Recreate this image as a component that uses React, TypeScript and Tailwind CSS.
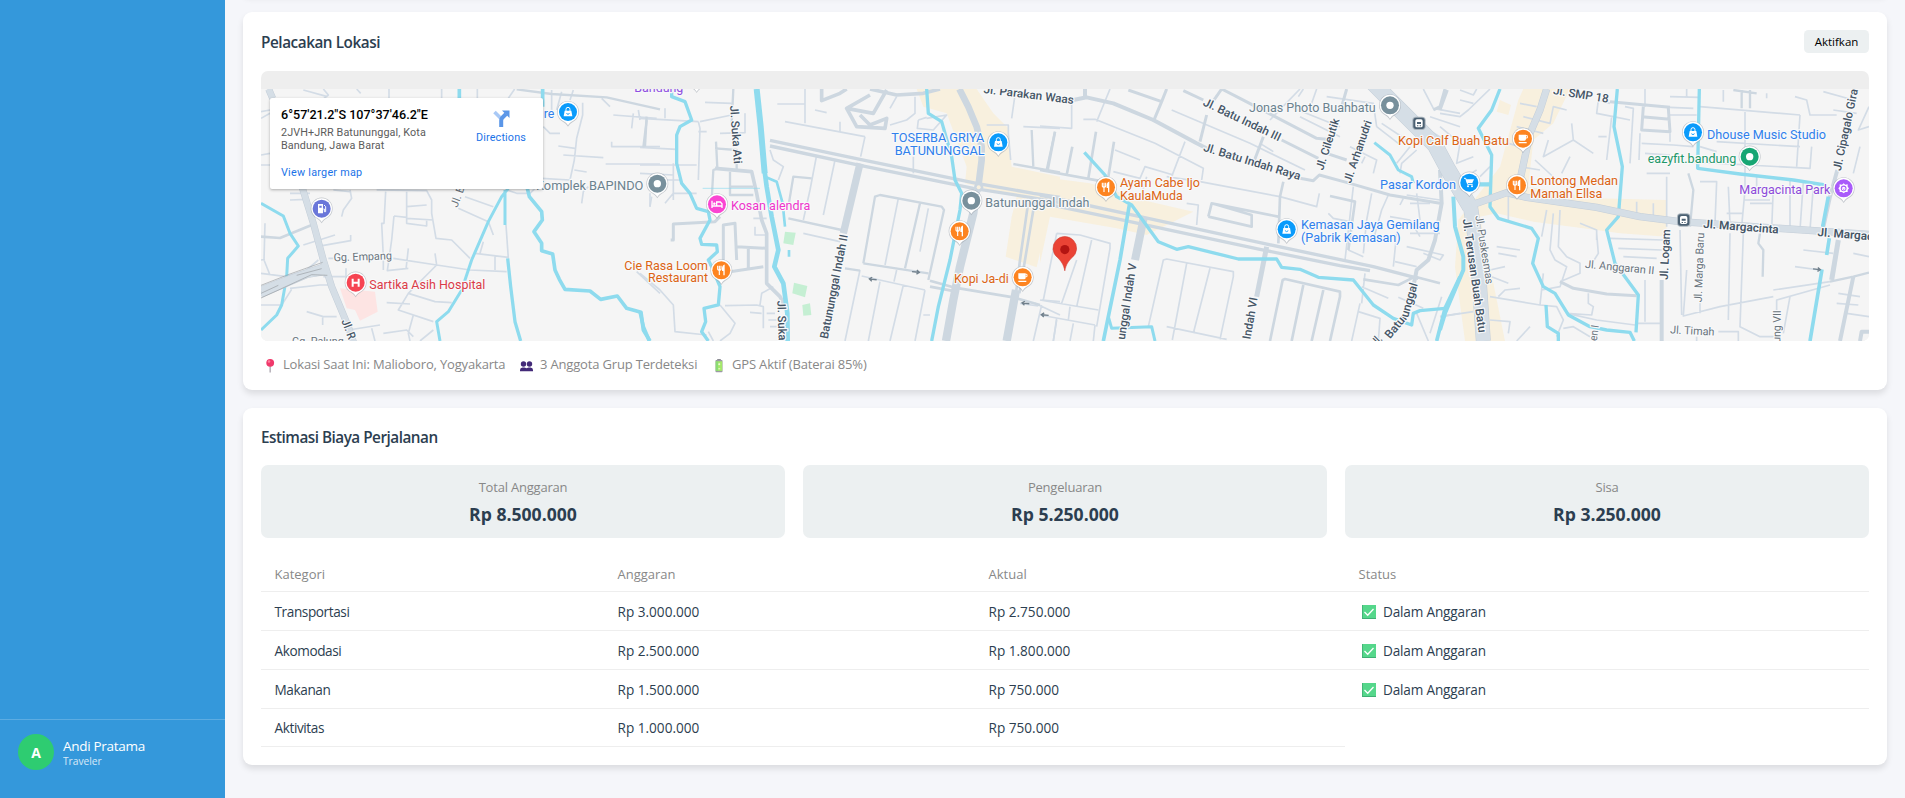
import React from "react";

type Stroke = { d: string; w: number };
type Label = { t: string; x: number; y: number; w: number; c?: string; r?: number; s?: number; b?: number };
type Pin = { x: number; y: number; kind: PinKind };
type PinKind = "bag" | "dot" | "bed" | "fork" | "cup" | "fuel" | "hospital" | "cart" | "green" | "park";
type Tile = {
  x: number;
  y: number;
  areas: { d: string; c: string }[];
  minor: string;
  roads: Stroke[];
  highways: Stroke[];
  water: Stroke[];
  labels: Label[];
  pins: Pin[];
  arrows?: [number, number, number][];
  transit?: [number, number][];
};

const BLUE = "#2f80ec";
const ORANGE = "#dc6414";
const SLATE = "#6b828e";
const ROAD = "#455566";
const LANE = "#68737c";
const SAND = "#f8f0de";

const tiles: Tile[] = [
  {
    x: 240,
    y: 0,
    areas: [{ d: "M300 865L405 875L413 935L360 962L345 930L320 925Z", c: "#fde4e3" }],
    minor:
      "M190 270L262 290M250 267L265 285L252 295M350 267L362 280M447 267V295M605 267V295M712 267V295M824 267L805 295M935 270V335M965 275L950 330M1000 270L990 300M1028 308V345L1010 415L1003 480L990 540L905 535M1085 295L1110 320M1120 345L1250 355M1175 385L1180 340M1195 330L1200 360M1115 425V440H1260M1097 492H1260M955 438L1005 445M970 465L1090 473M1003 510L1040 516M910 380L930 400H960M63 335L90 330M63 355L90 340M63 465L90 460M63 495H90M75 670L72 780L90 825M63 780L75 778M63 820L140 830M150 580H210M150 600L200 598M190 735L285 705M230 740L332 722V705M330 570L335 595L310 630L305 650M280 570L330 575M410 570L560 572L575 600L575 640L588 715L635 720L690 775M437 575L432 670H425L430 770V810M500 575V670L560 678V660M500 620L560 615M500 655L580 660M462 648L500 652M462 648L455 720L442 812L505 805M505 745L498 808M460 775L590 795L690 810L800 815M585 760L590 795L505 880L475 930L580 965M505 880L585 905L635 908M440 908L510 912M675 590L760 620M655 625L745 665L760 705M730 725L720 760M705 760L805 772M765 770V810M798 675L805 775M800 570L830 580L870 580L885 565M520 945L505 1000L510 1023M580 990L540 1023M430 1000L500 990L520 1010M200 935L250 950H290M248 950V975M325 990L420 975M395 985L405 1023M265 775H285M250 830H320M150 865L240 855H265M63 915L125 915L155 868M318 835V805M1025 610L1030 575L1045 560M1230 620L1235 590M1190 815L1260 880M140 830L200 810L235 780",
    roads: [
      { d: "M63 710L120 714L215 675", w: 8 },
      { d: "M830 268L935 282L1100 292L1260 328M1215 440L1220 350", w: 7 },
    ],
    highways: [
      { d: "M86 267L98 295M186 560L220 670L250 780L275 860L325 980L345 1040", w: 18 },
      { d: "M63 868L150 835L255 798M63 884L200 825L262 815", w: 16 },
    ],
    water: [
      { d: "M63 610L130 648L150 700L175 738L143 775L140 830L125 915L110 945L63 990", w: 9 },
      { d: "M658 267V295M908 267V320", w: 11 },
      { d: "M805 565L785 590L745 665L695 780L665 870L625 935L590 965L600 1023M795 570V675", w: 9 },
      { d: "M803 775L812 860L825 965L842 1023", w: 10 },
      { d: "M862 565L868 590L905 635L907 660L882 695L905 730V752L938 762L945 810L958 838L975 868L1050 873L1082 898L1132 888L1160 925L1203 937L1210 990L1230 1023", w: 11 },
    ],
    labels: [
      { t: "re", x: 911, y: 353, w: 32, c: BLUE },
      { t: "Komplek BAPINDO", x: 888, y: 569, w: 322, c: SLATE },
      { t: "Gg. Empang", x: 281, y: 784, w: 175, c: LANE, r: -2, s: 33 },
      { t: "Sartika Asih Hospital", x: 388, y: 866, w: 348, c: "#db3b48" },
      { t: "Gg. Palung", x: 156, y: 1034, w: 155, c: LANE, s: 33 },
      { t: "Jl. R", x: 304, y: 963, w: 62, r: 69, b: 500 },
      { t: "Jl. B", x: 652, y: 624, w: 66, c: LANE, r: -70, s: 33 },
    ],
    pins: [
      { x: 984, y: 336, kind: "bag" },
      { x: 245, y: 626, kind: "fuel" },
      { x: 347, y: 848, kind: "hospital" },
    ],
  },
  {
    x: 640,
    y: 60,
    areas: [
      { d: "M830 87H1010L1060 160L1105 205L1115 320L1260 350V450L1225 470L1190 622L1097 590L1115 470L1130 410L975 370L980 320L920 160L850 140Z", c: SAND },
      { d: "M435 515L467 518L460 555L430 550Z", c: "#c5efd3" },
      { d: "M462 668L502 678L495 712L457 700Z", c: "#c5efd3" },
      { d: "M487 735L510 730L514 765L490 767Z", c: "#c5efd3" },
    ],
    minor:
      "M412 132H495M495 87V190M435 185L675 230M675 230L662 290M600 185V215M750 145L770 110M525 150L560 158M0 315H170M0 262L110 268M75 175V145M0 175L175 185M175 185L180 205L175 360M175 215H200M195 127L275 130M180 185L275 165M240 220L315 218V160M0 340L100 345M100 310V420M75 360H120M30 440V400M75 430L100 400L170 400M345 500V525H380M340 475H380M490 520L600 545M530 285L510 390L490 480M585 300L550 465M390 270L400 300L430 320L415 360M775 415L735 615M865 445L840 575M660 630L615 843M665 648L855 690M720 665L685 843M790 675L750 843M855 690L825 843M770 630L762 665M850 765H870M1185 730L1260 765M1140 730L1195 738M1205 735L1180 843M1250 775L1240 843M1205 720L1260 725M1125 105L1115 175M1040 195H1105V220L1112 300M835 180L832 205L880 210L920 165L860 175M835 180L860 172M750 195L800 180L825 160V110M0 640L60 690L100 735L105 815L200 825M255 737L350 735L370 740V805M330 757L365 760M360 735L365 700L400 680M240 735L285 790L270 820L240 843M205 815L220 843M380 760H405M385 780H410M390 800H410M820 290V340M1150 200L1260 205",
    roads: [
      { d: "M390 241L660 298L1010 370L1180 400L1260 412M390 258L660 316L1000 385L1170 412L1260 428", w: 10 },
      { d: "M660 310L610 520", w: 22 },
      { d: "M958 87L985 140L1010 200L1025 260V300L1015 380", w: 20 },
      { d: "M1008 395L1000 460L960 620L940 720L918 843M1128 690L1100 843", w: 25 },
      { d: "M1165 425L1140 600L1128 700M1185 420L1155 600L1138 700", w: 8 },
      { d: "M870 662L940 682L1120 712L1200 735M870 680L950 695", w: 8 },
      { d: "M545 87V122L600 100L620 87M690 105L620 145L650 200L735 205L740 175L690 195L660 165M620 145L700 160L740 90M690 87L770 105L850 100L900 87", w: 11 },
      { d: "M225 325L335 335L350 400L365 480L380 520V670L420 710L435 740", w: 11 },
      { d: "M228 245L232 325L220 330L215 420M225 265L290 270V330M270 335V405H340M270 380H340M20 180L10 262M280 87L275 190", w: 7 },
      { d: "M92 540H100V492L225 485L240 470M250 625V495L285 490L290 600M290 560L380 565M325 630V560M270 635L370 620", w: 9 },
      { d: "M445 475L605 510M615 625L660 632M445 440L460 350L515 355M670 610L705 410L720 405L905 440L912 450L865 660M840 430L795 625M670 610L865 640M1120 312L1260 337M1175 210L1180 320M1245 215L1220 330", w: 7 },
    ],
    highways: [],
    water: [
      { d: "M95 87V110L135 125L155 180L120 200L110 225V310L125 370L150 400L170 445L205 455L210 480L180 535L185 553L230 555L232 575L205 600L215 620L240 680L235 735L192 745L197 785L185 815L205 843", w: 10 },
      { d: "M350 87L362 200L374 340", w: 18 },
      { d: "M374 335L380 380L395 470L415 570L403 620L430 670L442 760L443 843", w: 14 },
      { d: "M375 350L410 365L428 430L435 500M447 570V590", w: 8 },
      { d: "M188 385H360", w: 2 },
      { d: "M860 87L865 160L905 185L935 290L945 360L965 400L960 450L930 600L895 740L875 843", w: 10 },
      { d: "M0 755L10 800L28 843", w: 11 },
    ],
    labels: [
      { t: "Bandung", x: -17, y: 95, w: 147, c: "#8f4fe0" },
      { t: "TOSERBA GRIYA", x: 754, y: 246, w: 279, c: BLUE },
      { t: "BATUNUNGGAL", x: 764, y: 285, w: 270, c: BLUE },
      { t: "Batununggal Indah", x: 1036, y: 440, w: 312, c: SLATE },
      { t: "Kosan alendra", x: 273, y: 450, w: 238, c: "#ee35cc" },
      { t: "Cie Rasa Loom", x: -47, y: 629, w: 251, c: ORANGE },
      { t: "Restaurant", x: 24, y: 667, w: 180, c: ORANGE },
      { t: "Kopi Ja-di", x: 942, y: 669, w: 164, c: ORANGE },
      { t: "Jl. Suka Ati", x: 270, y: 137, w: 175, r: 86 },
      { t: "Jl. Suka", x: 412, y: 722, w: 120, r: 88 },
      { t: "Batununggal Indah II", x: 563, y: 838, w: 318, r: -79 },
      { t: "Jl. Parakan Waas", x: 1030, y: 99, w: 272, r: 7 },
    ],
    pins: [
      { x: 170, y: 55, kind: "dot" },
      { x: 52, y: 371, kind: "dot" },
      { x: 1075, y: 247, kind: "bag" },
      { x: 231, y: 433, kind: "bed" },
      { x: 244, y: 631, kind: "fork" },
      { x: 994, y: 422, kind: "dot" },
      { x: 959, y: 514, kind: "fork" },
      { x: 1148, y: 652, kind: "cup" },
    ],
    arrows: [[698, 658, 180], [828, 636, 0], [1156, 730, 180], [1214, 765, 180]],
  },
  {
    x: 1040,
    y: 60,
    areas: [{ d: "M0 350L150 370L330 425L460 455L320 525L230 505L30 470L0 610Z", c: SAND }],
    minor:
      "M95 130V205L0 198M225 270L300 300M130 178H165L345 250L490 325L485 360M435 245L395 350M210 87L170 185M395 150L630 250L795 330M220 335L300 355L315 320L400 345M300 420L320 350M380 350L480 365L720 410L830 440L838 400M470 495L475 435L440 430M865 460L880 475L930 485M940 380L915 600M995 400L980 480L970 580M1045 405L1025 450L1000 540M1070 520L1060 620M1050 470L1110 480M1080 435L1090 415M1100 405L1200 420M1110 430H1170M925 570L970 590M325 800L370 600L380 597L580 635V650L540 838M440 610L397 840M510 625L460 820M380 800L560 838M960 730L935 843M955 755L1020 775L1015 843M975 640L965 730M965 680L1045 715M1075 712L1150 745M1130 760L1165 843M1205 710L1170 820M1200 770L1260 760M0 720L175 750M0 765L165 795M50 520L10 720M50 520L120 525L210 550V565L170 800M110 600L65 730M155 540L110 740M90 740L85 780M50 780L40 843M100 790L90 843M165 795L160 843M690 180L780 87M830 87L815 130M775 110L790 87M860 110L1000 130L1010 200M750 140L900 200M930 260L1010 300L1000 340M965 310L975 290M1150 87L1180 145L1260 160M1070 310L1110 260M1080 340L1085 310L1130 270M1170 170L1260 200M1150 200L1215 240M1010 200L1075 250M1025 190L1100 240M1110 520H1200M1100 560L1210 585L1200 600L1150 580M1065 605L1130 620M1110 480L1140 530M700 275L660 250M780 170L900 230M1130 400L1140 480",
    roads: [
      { d: "M0 405L300 470L660 548L1000 620L1135 655M0 428L200 470L660 568L900 617L990 632", w: 10 },
      { d: "M312 470L285 600", w: 24 },
      { d: "M680 560L650 710", w: 15 },
      { d: "M100 120L140 112L220 130L340 180L470 250L520 275M135 87V112", w: 12 },
      { d: "M780 355L820 362L838 345L930 370L1050 405L1200 430M265 90L365 125L380 87M365 125L340 185M430 92L490 120M725 240L835 295M545 87L600 115L830 235L880 240M860 280L920 300M670 230L640 310M545 87L515 130M500 165L480 245M920 87L905 140M1215 87L1200 140L1180 150", w: 9 },
      { d: "M0 330L175 362M730 365L720 410L715 550M505 470L515 430L635 465V500L505 470M515 430L715 470M870 408L945 425L925 570M45 215L22 335M97 260L80 345M168 215L145 355M222 245L205 350", w: 8 },
      { d: "M1200 330L1205 430L1185 540L1165 600L1130 630L1120 680", w: 12 },
      { d: "M970 658L1075 675L1125 650L1200 670M690 843L728 660L735 657L900 695V710L870 843M790 675L755 843M850 690L815 843", w: 8 },
    ],
    highways: [{ d: "M1000 70L1050 120L1120 190L1185 255L1225 330L1290 440", w: 46 }],
    water: [
      { d: "M133 277L195 345L230 410L275 435L355 545L410 568L445 560L595 597H710L725 622L780 628L835 652L940 660L1000 735L1060 775L1115 795L1120 760L1140 752L1215 745", w: 10 },
      { d: "M268 435L240 600L205 770L190 843M1260 650L1215 745L1190 843", w: 11 },
      { d: "M205 770L215 805L335 800L345 843M1003 248L1050 285L1075 330L1115 350L1120 370", w: 9 },
    ],
    labels: [
      { t: "Ayam Cabe Ijo", x: 240, y: 381, w: 240, c: ORANGE },
      { t: "KaulaMuda", x: 240, y: 419, w: 188, c: ORANGE },
      { t: "Jonas Photo Buahbatu", x: 627, y: 155, w: 380, c: SLATE },
      { t: "Kopi Calf Buah Batu", x: 1074, y: 255, w: 333, c: ORANGE },
      { t: "Pasar Kordon", x: 1020, y: 387, w: 228, c: BLUE },
      { t: "Kemasan Jaya Gemilang", x: 783, y: 508, w: 416, c: BLUE },
      { t: "(Pabrik Kemasan)", x: 783, y: 546, w: 299, c: BLUE },
      { t: "Jl. Batu Indah III", x: 487, y: 135, w: 254, r: 25.5 },
      { t: "Jl. Batu Indah Raya", x: 488, y: 272, w: 303, r: 17 },
      { t: "Jl. Cileutik", x: 849, y: 332, w: 160, r: -72, s: 34 },
      { t: "Jl. Arhanudri", x: 932, y: 371, w: 196, r: -71, s: 34 },
      { t: "unggal Indah V", x: 254, y: 840, w: 231, r: -81 },
      { t: "Indah VI", x: 631, y: 839, w: 127, r: -80 },
      { t: "Jl.", x: 1008, y: 860, w: 30, r: -45 },
      { t: "Batun", x: 1050, y: 838, w: 92, r: -50 },
      { t: "unggal", x: 1104, y: 774, w: 106, r: -74 },
    ],
    pins: [
      { x: 198, y: 382, kind: "fork" },
      { x: 740, y: 508, kind: "bag" },
      { x: 1050, y: 136, kind: "dot" },
    ],
    transit: [[1137, 190]],
  },
  {
    x: 1440,
    y: 0,
    areas: [
      { d: "M250 267H390L340 370L280 420L265 560L470 595L680 600V710L540 700L470 690L280 665L170 640L120 650L195 1023H75L45 800L55 660L180 500L235 300Z", c: SAND },
      { d: "M180 300L213 315L205 345L170 335Z", c: SAND },
    ],
    minor:
      "M690 322L760 325M690 345H770M690 290L780 292M740 267V290M615 267V320M510 310L475 300L470 340L520 350L570 360M555 320L580 325L570 490M515 350L500 480M475 410H500M395 370L400 420L310 470L325 420M400 420L460 460M365 520L390 470M285 480L350 540M600 400L597 480M690 400V425M605 430L700 435L760 440M615 460L690 465M620 520H690M680 530V680M915 330V570L905 680M780 320L1080 345M850 270V305M980 280V295M1080 345L1070 500M740 485L1110 505L1115 440M830 425L1080 440M1065 290L1100 300L1110 345H1190M1150 275L1240 300M1180 330L1250 340M1287 320L1255 390L1287 380M780 440L830 455M780 545H830L825 670M865 560L870 670M910 600H990M1000 560L995 690M930 610H1000M1050 540V690M1090 545L1080 690M1120 560L1110 690M910 640H860M1260 440L1240 520M1000 870L1170 845M1000 890L840 920L730 948L740 810M1010 930V900L1170 855M1050 890L1030 1000M1287 770L1240 760M1090 750L1180 760M1065 800L1140 810M1195 880L1260 890M1190 910L1255 915M1220 940L1287 950M910 700L900 980L960 1010H1020M870 700L865 960M720 690L725 945M780 910V940M550 770L650 775M535 745L665 750M510 715L670 720M615 840V965M590 970H660M835 995H895V1023M770 1010V1023M205 590V660M150 890L300 915L350 920L370 960L350 1010M175 890L195 870L240 865M300 915L310 820M305 870L360 860L380 800L345 780L330 750L340 640M360 630L355 740L380 770L420 790V820L360 845M470 700L475 760L450 800M420 670L470 690V720M320 630L305 710M170 740L240 750M175 760L230 770M150 810L195 800M155 830L205 850M205 1000L210 965L150 960M230 1023L270 980M445 880V910L460 920L455 945L380 940L470 960L585 975M370 985L400 980L450 1010M0 340L60 350L85 330L150 267M0 380L60 430L50 490L100 470M110 510L60 540M100 310L60 300M150 500L120 530M240 310L290 320M250 350L330 370L340 320L380 330M230 380L310 400M205 430L240 440M240 500L300 510M0 950L100 935M590 605V640M640 610V650M950 530V560M60 270L100 285L110 267",
    roads: [
      { d: "M510 305L690 322M610 320L605 390L690 395L685 325M605 350L690 358M360 845L400 865L500 882L590 887M22 270L0 330", w: 9 },
      { d: "M745 520L760 570L750 680M905 270V325M930 270V325M880 270L950 280M960 700L955 730L970 750L968 830M1170 845L1240 830L1287 818", w: 7 },
      { d: "M1192 510L1170 590L1148 690M1240 830L1200 1023M665 840V1023M1260 1023L1265 995H1287", w: 12 },
      { d: "M1195 720L1175 840", w: 15 },
    ],
    highways: [
      { d: "M90 610L112 760L130 1023", w: 42 },
      { d: "M95 615L200 578L260 592L470 622L600 650L720 665L1287 703M320 267L300 330L270 400L240 540L235 560", w: 19 },
    ],
    water: [
      { d: "M180 267L155 330L115 385L155 465L150 620L175 655L275 685L295 715L278 790L310 860L345 880L385 945L450 980L500 990L570 997L583 1023", w: 10 },
      { d: "M118 553H155", w: 13 },
      { d: "M532 267L522 380L547 500L535 650L500 690L525 790L595 885L588 997", w: 10 },
      { d: "M40 590L45 680L70 770V810L15 940L0 990", w: 12 },
      { d: "M318 915L322 980L355 1000V1023M778 267L773 505L900 522L1060 540L1155 555", w: 10 },
      { d: "M1165 590L1148 680M1168 715L1160 765M1146 808L1110 1023", w: 11 },
    ],
    labels: [
      { t: "Jl. SMP 18", x: 338, y: 282, w: 168, r: 9 },
      { t: "Dhouse Music Studio", x: 801, y: 416, w: 357, c: BLUE },
      { t: "eazyfit.bandung", x: 623, y: 489, w: 266, c: "#219768" },
      { t: "Margacinta Park", x: 898, y: 583, w: 273, c: "#8d4bd9" },
      { t: "Lontong Medan", x: 271, y: 556, w: 263, c: ORANGE },
      { t: "Mamah Ellsa", x: 271, y: 594, w: 216, c: ORANGE },
      { t: "Jl. Margacinta", x: 789, y: 683, w: 227, r: 4.5, b: 600 },
      { t: "Jl. Margacinta", x: 1132, y: 708, w: 227, r: 4.5, b: 600 },
      { t: "Jl. Logam", x: 683, y: 840, w: 152, r: -87 },
      { t: "Jl. Marga Baru", x: 785, y: 907, w: 209, r: -88, c: LANE, s: 33 },
      { t: "Jl. Timah", x: 690, y: 1000, w: 133, r: 3, c: LANE, s: 33 },
      { t: "Jl. Anggaran II", x: 434, y: 803, w: 209, r: 5.5, c: LANE, s: 33 },
      { t: "ung VII", x: 1021, y: 1028, w: 97, r: -89, c: LANE, s: 33 },
      { t: "en I", x: 470, y: 1024, w: 48, r: -82, c: LANE, s: 33 },
      { t: "Jl. Cipagalo Gira", x: 1202, y: 514, w: 250, r: -78 },
      { t: "Jl. Puskesmas", x: 106, y: 648, w: 208, r: 81, c: LANE, s: 33 },
      { t: "Jl. Terusan Buah Batu", x: 68, y: 658, w: 344, r: 82, b: 500 },
    ],
    pins: [
      { x: 249, y: 416, kind: "cup" },
      { x: 88, y: 548, kind: "cart" },
      { x: 231, y: 556, kind: "fork" },
      { x: 759, y: 397, kind: "bag" },
      { x: 929, y: 470, kind: "green" },
      { x: 1211, y: 565, kind: "park" },
    ],
    arrows: [[1131, 808, 0]],
    transit: [[731, 660]],
  },
];

const pinColor: Record<PinKind, string> = {
  bag: "#0a9bfb",
  dot: "#78909c",
  bed: "#fa45d2",
  fork: "#fd8421",
  cup: "#fd8421",
  fuel: "#6a76d9",
  hospital: "#f64452",
  cart: "#0a9bfb",
  green: "#17a673",
  park: "#a95bfa",
};

function Glyph({ kind }: { kind: PinKind }) {
  switch (kind) {
    case "bag":
      return (
        <g>
          <path d="M-10 -4H10L13 13H-13Z" fill="#fff" />
          <path d="M-6 -3V-8a6 6 0 0 1 12 0V-3" fill="none" stroke="#fff" strokeWidth="3" />
          <path d="M-4 3a4 4 0 0 0 8 0" fill="none" stroke="#0a9bfb" strokeWidth="2.5" />
        </g>
      );
    case "bed":
      return (
        <g fill="none" stroke="#fff" strokeWidth="4">
          <path d="M-15 -11V11M-15 5H15M15 11V-2L10 -7H-1V4" />
          <circle cx="-8" cy="-2" r="3" fill="#fff" strokeWidth="2" />
        </g>
      );
    case "fork":
      return (
        <g fill="none" stroke="#fff">
          <path d="M-11 -14V-5Q-11 0 -6 0Q-1 0 -1 -5V-14M-6 -14V14" strokeWidth="3.4" />
          <path d="M8 15V-14Q3 -11 4 0H8" strokeWidth="4" fill="#fff" />
        </g>
      );
    case "cup":
      return (
        <g>
          <path d="M-13 -12H9V1Q9 6 4 6H-8Q-13 6 -13 1ZM-13 10H11V14H-13Z" fill="#fff" />
          <path d="M8 -9H13V-2H8" fill="none" stroke="#fff" strokeWidth="3" />
        </g>
      );
    case "fuel":
      return (
        <g>
          <path d="M-11 -14H4V14H-11Z" fill="#fff" />
          <path d="M-7 -9H0V-3H-7Z" fill="#6a76d9" />
          <path d="M5 1H8V9H12V-6L7 -11" fill="none" stroke="#fff" strokeWidth="3" />
        </g>
      );
    case "hospital":
      return <path d="M-9 -12V12M9 -12V12M-9 0H9" fill="none" stroke="#fff" strokeWidth="6" />;
    case "cart":
      return (
        <g>
          <path d="M-16 -13H-11L-5 5H10" fill="none" stroke="#fff" strokeWidth="3" />
          <path d="M-10 -10H14L9 1H-7Z" fill="#fff" />
          <circle cx="-4" cy="11" r="3" fill="#fff" />
          <circle cx="8" cy="11" r="3" fill="#fff" />
        </g>
      );
    case "park":
      return (
        <g>
          <path d="M0 -15L5 -11L12 -12L12 -5L16 0L12 5L12 11L5 11L0 15L-5 11L-12 11L-12 5L-16 0L-12 -5L-12 -12L-5 -11Z" fill="#fff" />
          <circle r="8.500" fill="#a95bfa" />
          <circle cy="1" r="5.500" fill="#fff" />
          <path d="M-3 0V-1M3 0V-1M-2 3H2" stroke="#a95bfa" strokeWidth="2" />
        </g>
      );
    default:
      return <circle cx="0" cy="0" r="11" fill="#fff" />;
  }
}

function MapPin({ x, y, kind }: Pin) {
  return (
    <g transform={`translate(${x} ${y})`}>
      <path d="M0 44C-5 36 -10 32 -20 26A33 33 0 1 1 20 26C10 32 5 36 0 44Z" fill="#9aa3ab" opacity=".55" />
      <path d="M0 40C-5 32 -10 29 -19 24A31 31 0 1 1 19 24C10 29 5 32 0 40Z" fill="#fff" />
      <circle r="27" fill={pinColor[kind]} />
      <Glyph kind={kind} />
    </g>
  );
}

function Layer({ render }: { render: (tile: Tile) => React.ReactNode }) {
  return (
    <>
      {tiles.map((tile, i) => (
        <g key={i} transform={`translate(${tile.x} ${tile.y}) scale(0.33333)`}>
          {render(tile)}
        </g>
      ))}
    </>
  );
}

function StreetMap() {
  return (
    <svg className="block h-[252px] w-[1608px]" viewBox="261 89 1608 252" fill="none">
      <rect x="261" y="89" width="1608" height="252" fill="#f5f5f5" />
      <Layer render={(t) => t.areas.map((a, i) => <path key={i} d={a.d} fill={a.c} />)} />
      <Layer render={(t) => <path d={t.minor} stroke="#d3dce6" strokeWidth="5" strokeLinejoin="round" />} />
      <Layer render={(t) => t.roads.map((r, i) => <path key={i} d={r.d} stroke="#cdd7e0" strokeWidth={r.w} strokeLinejoin="round" />)} />
      <Layer render={(t) => t.water.map((r, i) => <path key={i} d={r.d} stroke="#8edbee" strokeWidth={r.w} strokeLinejoin="round" />)} />
      <Layer render={(t) => t.highways.map((r, i) => <path key={i} d={r.d} stroke="#c4ced8" strokeWidth={r.w + 3} strokeLinejoin="round" />)} />
      <Layer render={(t) => t.highways.map((r, i) => <path key={i} d={r.d} stroke="#d5dee6" strokeWidth={r.w} strokeLinejoin="round" />)} />
      <g transform="translate(240 0) scale(0.33333)" stroke="#9a9fa3" strokeWidth="2">
        <path d="M63 856L150 822L248 787M63 894L120 868L215 824L262 826M63 880L115 856M170 826L245 806" />
      </g>
      <g transform="translate(640 60) scale(0.33333)">
        <circle cx="1016" cy="382" r="14" fill="#cdd7e0" />
        <circle cx="1016" cy="382" r="6" fill={SAND} />
      </g>
      <Layer
        render={(t) =>
          t.arrows?.map(([x, y, r], i) => (
            <path key={i} transform={`translate(${x} ${y}) rotate(${r + 6})`} d="M-12 0H8M2 -6L10 0L2 6" stroke="#71808c" strokeWidth="4" />
          ))
        }
      />
      <Layer
        render={(t) =>
          t.labels.map((l, i) => (
            <text
              key={i}
              transform={`translate(${l.x} ${l.y}) rotate(${l.r ?? 0})`}
              textLength={l.w}
              lengthAdjust="spacingAndGlyphs"
              fontSize={l.s ?? (l.c ? 38.5 : 35)}
              fontWeight={l.b ?? (l.c ? 400 : 500)}
              fill={l.c ?? ROAD}
              stroke="#f8f9fa"
              strokeWidth="7"
              strokeLinejoin="round"
              paintOrder="stroke"
              fontFamily="Roboto, sans-serif"
            >
              {l.t}
            </text>
          ))
        }
      />
      <Layer
        render={(t) =>
          t.transit?.map(([x, y], i) => (
            <g key={i} transform={`translate(${x} ${y})`}>
              <rect x="-20" y="-20" width="40" height="40" rx="11" fill="#a9b4bd" />
              <rect x="-17" y="-17" width="34" height="34" rx="8" fill="#4b6072" />
              <rect x="-11" y="-12" width="22" height="24" rx="5" fill="#fff" />
              <path d="M-6 -4H6V2H-6ZM-6 6H-2V9H-6ZM2 6H6V9H2Z" fill="#4b6072" />
            </g>
          ))
        }
      />
      <Layer render={(t) => t.pins.map((p, i) => <MapPin key={i} {...p} />)} />
      <g transform="translate(1064.8 249.3)">
        <path d="M0 21.5C-1.2 15 -3.5 12.200 -7 8.500A11.800 11.800 0 1 1 7 8.500C3.500 12.200 1.200 15 0 21.500Z" fill="#ea4335" stroke="#d23c30" strokeWidth=".6" />
        <circle cx="0" cy="0.300" r="4.600" fill="#b31412" />
      </g>
    </svg>
  );
}

function PlaceCard() {
  return (
    <div className="absolute left-[9px] top-[27px] flex h-[91px] w-[273px] justify-between rounded-[2px] bg-white pl-[11px] pr-[17px] pt-[9px] font-['Roboto',sans-serif] shadow-[0_1px_3px_rgba(0,0,0,0.3)]">
      <div className="flex flex-col whitespace-nowrap">
        <div className="text-[12.600px] font-medium leading-4 text-black">6°57'21.2"S 107°37'46.2"E</div>
        <div className="mt-[3px] text-[10.800px] leading-[13px] tracking-[0.1px] text-[#5b5b5b]">
          2JVH+JRR Batununggal, Kota
          <br />
          Bandung, Jawa Barat
        </div>
        <div className="mt-[14px] text-[10.800px] leading-[14px] tracking-[0.25px] text-[#1a73e8]">View larger map</div>
      </div>
      <div className="flex flex-col items-center pt-[3px]">
        <svg className="h-[17px] w-[17px]" viewBox="0 0 17 17" fill="none">
          <path d="M1.500 2L8 8.500" stroke="#a9c9f6" strokeWidth="3.600" />
          <path d="M8.200 17V10.500Q8.200 8.800 9.500 7.500L13 4" stroke="#5a96e8" strokeWidth="4" />
          <path d="M9 .5H16.500V8Z" fill="#5a96e8" />
        </svg>
        <div className="mt-[4px] text-[10.800px] leading-[14px] tracking-[0.15px] text-[#1a73e8]">Directions</div>
      </div>
    </div>
  );
}

function PushPin() {
  return (
    <svg className="h-[15px] w-[15px]" viewBox="0 0 15 15">
      <path d="M6.500 6H7.800V14.500H6.500Z" fill="#a9a3ad" />
      <circle cx="7.200" cy="4.800" r="3.900" fill="#f0396b" />
      <circle cx="6" cy="3.500" r="1.300" fill="#ff7d9c" />
    </svg>
  );
}

function People() {
  return (
    <svg className="h-[15px] w-[15px]" viewBox="0 0 15 15" fill="#432a78">
      <circle cx="4.500" cy="6" r="2.700" />
      <circle cx="10.500" cy="6" r="2.700" />
      <path d="M1 13.200V12Q1 9.800 3.500 9.500H5.500L7.500 10.300L9.500 9.500H11.500Q14 9.800 14 12V13.200Z" />
    </svg>
  );
}

function Battery() {
  return (
    <svg className="h-[15px] w-[15px]" viewBox="0 0 15 15">
      <rect x="5.200" y="1" width="3.600" height="2" fill="#8d8d94" />
      <rect x="3.500" y="2" width="7" height="12.200" rx=".8" fill="#9a9aa3" />
      <rect x="3.800" y="3.300" width="6.400" height="9.600" fill="#a5e86b" />
      <rect x="3.800" y="3.300" width="2.200" height="9.600" fill="#8bdc74" />
      <path d="M6.300 6.200H8.200M7.200 5.200V7.200M6.300 10.800H8.200" stroke="#f4ffe6" strokeWidth=".9" />
    </svg>
  );
}

function CheckBox() {
  return (
    <svg className="-mt-px h-[14px] w-[14px]" viewBox="0 0 14 14" fill="none">
      <rect width="14" height="14" fill="#3fae74" />
      <rect x=".8" width="13.200" height="13" fill="#55d78b" />
      <path d="M2.500 7L5.700 10.200L11.500 4" stroke="#fff" strokeWidth="1.300" />
    </svg>
  );
}

const card = "rounded-[9px] bg-white px-[18px] shadow-[0_4px_6px_rgba(0,0,0,0.1)]";

const stats = [
  { label: "Total Anggaran", value: "Rp 8.500.000" },
  { label: "Pengeluaran", value: "Rp 5.250.000" },
  { label: "Sisa", value: "Rp 3.250.000" },
];

const rows = [
  { name: "Transportasi", budget: "Rp 3.000.000", actual: "Rp 2.750.000", ok: true },
  { name: "Akomodasi", budget: "Rp 2.500.000", actual: "Rp 1.800.000", ok: true },
  { name: "Makanan", budget: "Rp 1.500.000", actual: "Rp 750.000", ok: true },
  { name: "Aktivitas", budget: "Rp 1.000.000", actual: "Rp 750.000", ok: false },
];

const grid = "grid grid-cols-[343px_371px_370px_524px]";

export default function App() {
  return (
    <div className="flex h-[798px] w-[1905px] overflow-hidden bg-[#f5f6fa] font-['Open_Sans','Noto_Sans',sans-serif] text-[#2c3e50]">
      <aside className="flex w-[225px] shrink-0 flex-col justify-end bg-[#3498db] text-white">
        <div className="flex h-[79px] items-start gap-[9px] border-t border-white/20 px-[18px] pt-[14px]">
          <div className="flex h-9 w-9 items-center justify-center rounded-full bg-[#2ecc71] text-[14px] font-bold">A</div>
          <div className="pt-[3px]">
            <div className="text-[13.500px] leading-[18px] tracking-[-0.3px]">Andi Pratama</div>
            <div className="text-[10.200px] leading-[12px] opacity-80">Traveler</div>
          </div>
        </div>
      </aside>

      <main className="flex flex-1 flex-col px-[18px]">
        <div className="-mt-[18px] mb-[18px] h-3 shrink-0 rounded-[9px] bg-white shadow-[0_4px_6px_rgba(0,0,0,0.1)]" />
        <section className={`${card} h-[378px] shrink-0 pt-[18px]`}>
          <header className="flex h-[23px] items-center justify-between">
            <h2 className="pt-px text-[15.300px] font-semibold tracking-[-0.45px]">Pelacakan Lokasi</h2>
            <button className="h-[23px] w-[65px] rounded-[4.500px] bg-[#ecf0f1] text-[11.500px] leading-[24px] text-black">Aktifkan</button>
          </header>
          <div className="relative mt-[18px] h-[270px] overflow-hidden rounded-[7px] bg-[#eee] pt-[18px]">
            <StreetMap />
            <PlaceCard />
          </div>
          <div className="mt-[14px] flex h-5 items-center whitespace-nowrap text-[13px] tracking-[-0.17px] text-[#888]">
            <div className="flex w-[256px] items-center gap-[5px] pl-[2px]">
              <PushPin />
              Lokasi Saat Ini: Malioboro, Yogyakarta
            </div>
            <div className="flex w-[193px] items-center gap-[6px] pl-[2px]">
              <People />
              3 Anggota Grup Terdeteksi
            </div>
            <div className="flex items-center gap-[5px] pl-[2px]">
              <Battery />
              GPS Aktif (Baterai 85%)
            </div>
          </div>
        </section>

        <section className={`${card} mt-[18px] h-[357px] shrink-0 pt-[18px]`}>
          <h2 className="h-[23px] text-[15.300px] font-semibold leading-[23px] tracking-[-0.5px]">Estimasi Biaya Perjalanan</h2>
          <div className="mt-4 grid grid-cols-3 gap-[18px]">
            {stats.map((s) => (
              <div key={s.label} className="flex h-[73px] flex-col items-center rounded-[7px] bg-[#ecf0f1] pt-[13px]">
                <div className="text-[13px] leading-[18px] tracking-[-0.2px] text-[#888]">{s.label}</div>
                <div className="mt-[6px] text-[17.600px] font-bold leading-6">{s.value}</div>
              </div>
            ))}
          </div>
          <div className="mt-[18px] text-[13.600px]">
            <div className={`${grid} h-9 items-center border-b border-[#eee] pt-[2px] text-[13px] text-[#888]`}>
              <div className="pl-[13.500px]">Kategori</div>
              <div className="pl-[13.500px]">Anggaran</div>
              <div className="pl-[13.500px]">Aktual</div>
              <div className="pl-[13.500px]">Status</div>
            </div>
            {rows.map((r) => (
              <div key={r.name} className={`${grid} ${r.ok ? "h-[39px]" : "h-[38px]"}`}>
                <div className="flex items-center border-b border-[#eee] pl-[13.500px] pt-[2px] tracking-[-0.4px]">{r.name}</div>
                <div className="flex items-center border-b border-[#eee] pl-[13.500px] pt-[2px]">{r.budget}</div>
                <div className="flex items-center border-b border-[#eee] pl-[13.500px] pt-[2px]">{r.actual}</div>
                {r.ok && (
                  <div className="flex items-center gap-[7px] border-b border-[#eee] pl-[17px] pt-[2px] tracking-[-0.17px]">
                    <CheckBox />
                    Dalam Anggaran
                  </div>
                )}
              </div>
            ))}
          </div>
        </section>
      </main>
    </div>
  );
}
